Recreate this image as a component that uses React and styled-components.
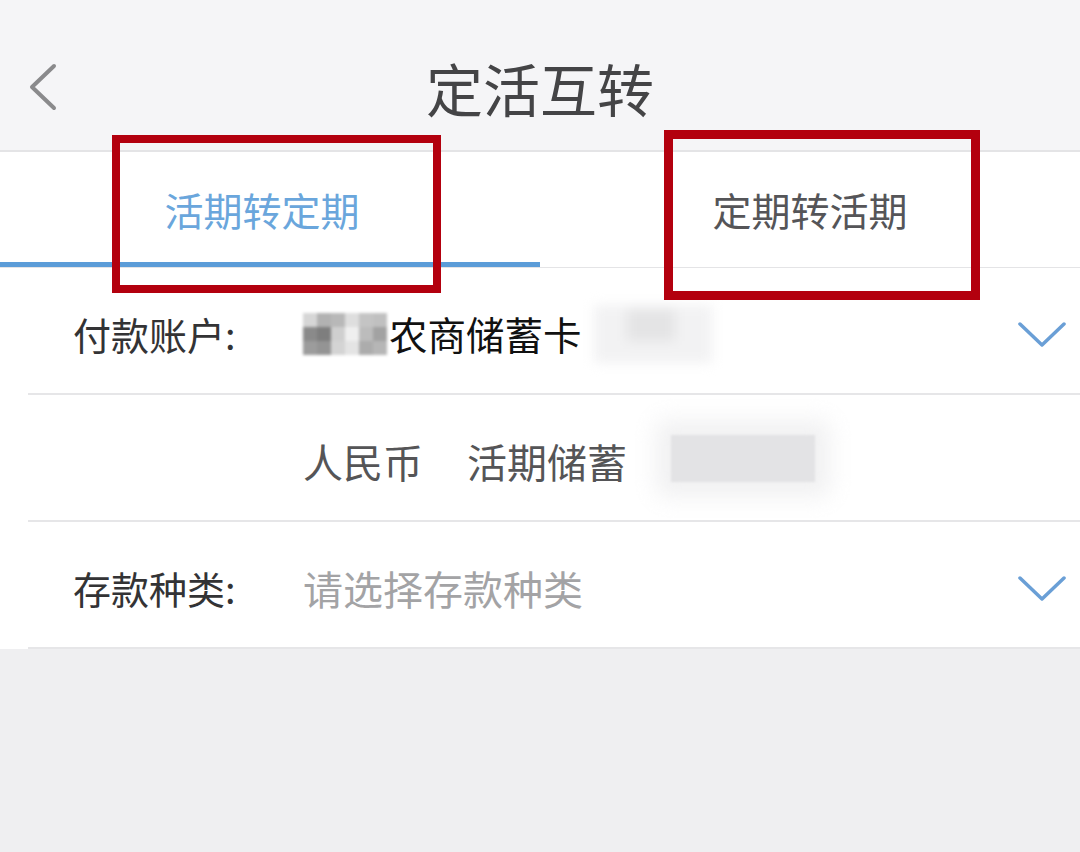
import React from 'react'
import styled, { createGlobalStyle } from 'styled-components'

const GlobalStyle = createGlobalStyle`
  html, body {
    margin: 0;
    padding: 0;
    background: #efeff1;
    font-family: "Noto Sans CJK SC", "Noto Sans", sans-serif;
  }
`

const Page = styled.div`
  position: relative;
  width: 1080px;
  min-height: 852px;
  background: #efeff1;
  overflow: hidden;
`

const NavBar = styled.div`
  height: 126px;
  padding-top: 24px;
  background: #f5f5f7;
  border-bottom: 2px solid #e4e4e6;
  display: grid;
  grid-template-columns: 1fr auto 1fr;
  align-items: center;
`

const BackButton = styled.div`
  padding-left: 28px;
  display: flex;
  align-items: center;
`

const Title = styled.h1`
  margin: 0;
  font-size: 57px;
  font-weight: 400;
  line-height: 1;
  color: #444446;
`

const TabBar = styled.div`
  display: grid;
  grid-template-columns: 1fr 1fr;
  background: #ffffff;
  border-bottom: 1px solid #e4e4e6;
`

const Tab = styled.div`
  position: relative;
  height: 115px;
  display: flex;
  align-items: center;
  justify-content: center;
  padding-right: ${p => (p.$active ? 16 : 0)}px;
  font-size: 39px;
  line-height: 1;
  color: ${p => (p.$active ? '#6aa6dc' : '#555558')};

  &::after {
    content: '';
    position: absolute;
    left: 0;
    right: 0;
    bottom: 0;
    height: 5px;
    background: ${p => (p.$active ? '#5b9cd8' : 'transparent')};
  }
`

const Form = styled.div`
  background: #ffffff;
  padding-left: 28px;
`

const Row = styled.div`
  height: 119px;
  padding-top: 6px;
  display: flex;
  align-items: center;
  padding-left: 45px;
  padding-right: 14px;
  border-bottom: 2px solid #e6e6e8;
`

const Label = styled.div`
  width: 230px;
  flex-shrink: 0;
  font-size: 38px;
  line-height: 1;
  color: #333335;
`

const Value = styled.div`
  flex: 1;
  display: flex;
  align-items: center;
  gap: ${p => p.$gap || 0}px;
  font-size: ${p => p.$size || 40}px;
  line-height: 1;
  color: ${p => p.$color || '#111'};
  white-space: nowrap;
`

const Mosaic = styled.div`
  display: grid;
  grid-template-columns: repeat(6, 14px);
  grid-auto-rows: 14px;
  filter: blur(1.5px);
  margin-right: 2px;
`

const MosaicCell = styled.div`
  background: ${p => p.$c};
`

const BlurMask = styled.div`
  width: ${p => p.$w}px;
  height: ${p => p.$h}px;
  margin-left: ${p => p.$ml || 0}px;
  margin-top: ${p => p.$mt || 0}px;
  background: ${p => p.$bg};
  filter: blur(${p => p.$blur}px);
  box-shadow: ${p => p.$glow || 'none'};
`

const Chevron = styled.svg`
  flex-shrink: 0;
  width: 48px;
  height: 26px;
`

const Annotation = styled.div`
  position: absolute;
  left: ${p => p.$x}px;
  top: ${p => p.$y}px;
  width: ${p => p.$w}px;
  height: ${p => p.$h}px;
  box-sizing: border-box;
  border: ${p => p.$b}px solid #b3000e;
  pointer-events: none;
`

const mosaic = [
  '#d6d6d6', '#b2b2b2', '#b8b8b8', '#dedede', '#c4c4c4', '#c0c0c0',
  '#8a8a8a', '#7e7e7e', '#cfcfcf', '#efefef', '#bcbcbc', '#a2a2a2',
  '#9c9c9c', '#949494', '#d4d4d4', '#e4e4e4', '#acacac', '#b6b6b6'
]

const DownArrow = () => (
  <Chevron viewBox="0 0 48 26">
    <polyline
      points="2,3 24,24 46,3"
      fill="none"
      stroke="#6a9fd6"
      strokeWidth="3.5"
      strokeLinecap="round"
      strokeLinejoin="round"
    />
  </Chevron>
)

export default function App() {
  return (
    <Page>
      <GlobalStyle />
      <NavBar>
        <BackButton>
          <svg width="30" height="48" viewBox="0 0 30 48">
            <polyline
              points="26,3 4,24 26,45"
              fill="none"
              stroke="#8a8a8c"
              strokeWidth="4"
              strokeLinecap="round"
              strokeLinejoin="round"
            />
          </svg>
        </BackButton>
        <Title>定活互转</Title>
        <div />
      </NavBar>

      <TabBar>
        <Tab $active>活期转定期</Tab>
        <Tab>定期转活期</Tab>
      </TabBar>

      <Form>
        <Row>
          <Label>付款账户:</Label>
          <Value $size={38.5}>
            <Mosaic>
              {mosaic.map((c, i) => (
                <MosaicCell key={i} $c={c} />
              ))}
            </Mosaic>
            <span>农商储蓄卡</span>
            <BlurMask
              $w={118}
              $h={58}
              $ml={12}
              $bg="linear-gradient(#e4e4e5, #e4e4e5) 33px 4px / 48px 32px no-repeat, #f2f2f3"
              $blur={6}
            />
          </Value>
          <DownArrow />
        </Row>

        <Row>
          <Label />
          <Value $color="#555557" $gap={44}>
            <span>人民币</span>
            <span>活期储蓄</span>
            <BlurMask
              $w={144}
              $h={47}
              $mt={-4}
              $bg="#e3e3e5"
              $blur={1}
              $glow="0 0 22px 14px rgba(238, 238, 240, 0.9)"
            />
          </Value>
        </Row>

        <Row>
          <Label>存款种类:</Label>
          <Value $color="#a3a3a5">请选择存款种类</Value>
          <DownArrow />
        </Row>
      </Form>

      <Annotation $x={112} $y={135} $w={329} $h={158} $b={8} />
      <Annotation $x={664} $y={130} $w={316} $h={170} $b={9} />
    </Page>
  )
}
